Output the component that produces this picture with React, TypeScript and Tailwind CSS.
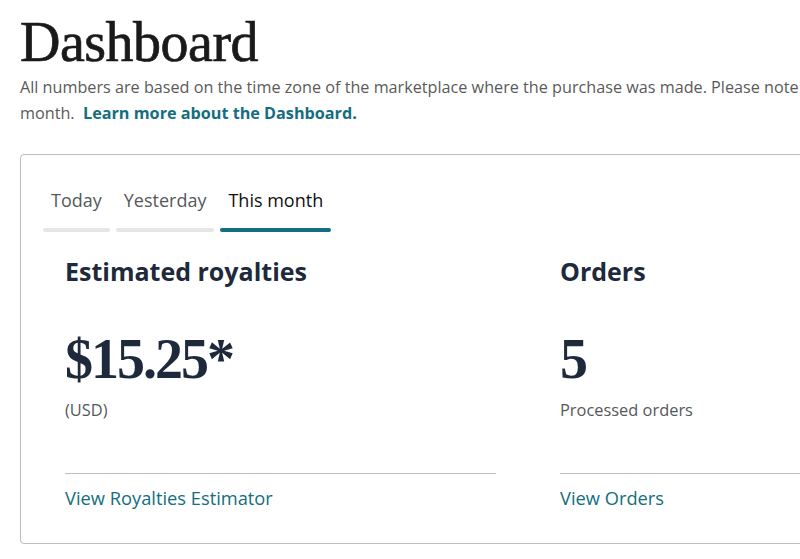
import React from "react";

const sans = { fontFamily: '"Open Sans", "Noto Sans", sans-serif' };

export default function App() {
  return (
    <div className="w-[800px] h-[559px] overflow-hidden bg-white" style={sans}>
      <div className="pl-[20px] w-[1400px]">
        <h1
          className="text-[56px] leading-[56px] pt-[14px] text-[#1a1a1a] font-normal tracking-[-0.5px] [-webkit-text-stroke:0.7px_#1a1a1a]"
          style={{ fontFamily: '"Liberation Serif", "DejaVu Serif", serif' }}
        >
          Dashboard
        </h1>
        <div className="mt-[4px] text-[16.2px] leading-[26px] text-[#5a5a5a]">
          <div className="whitespace-nowrap">
            All numbers are based on the time zone of the marketplace where the purchase was made. Please note that numbers may change during the
          </div>
          <div className="whitespace-nowrap">
            month.{"\u00a0\u00a0"}
            <a className="font-bold text-[#146e7e]">Learn more about the Dashboard.</a>
          </div>
        </div>

        <div className="mt-[28px] border border-[#bdbdbd] rounded-[4px] w-[1200px] px-[22px] pt-[33px] pb-[33px]">
          <div className="flex gap-[6px]">
            {[
              { label: "Today", active: false },
              { label: "Yesterday", active: false },
              { label: "This month", active: true },
            ].map((t) => (
              <div key={t.label} className="flex flex-col">
                <div
                  className={
                    t.active
                      ? "px-[8px] text-[18px] leading-[24px] text-[#0f1111]"
                      : "px-[8px] text-[18px] leading-[24px] text-[#565959]"
                  }
                >
                  {t.label}
                </div>
                <div
                  className={
                    t.active
                      ? "mt-[16px] h-[4px] rounded-full bg-[#146e7e]"
                      : "mt-[16px] h-[4px] rounded-full bg-[#e6e6e6]"
                  }
                />
              </div>
            ))}
          </div>

          <div className="flex gap-[64px] px-[22px] mt-[25px]">
            <Metric
              title="Estimated royalties"
              value="$15.25*"
              sub="(USD)"
              link="View Royalties Estimator"
            />
            <Metric title="Orders" value="5" sub="Processed orders" link="View Orders" />
          </div>
        </div>
      </div>
    </div>
  );
}

function Metric({
  title,
  value,
  sub,
  link,
}: {
  title: string;
  value: string;
  sub: string;
  link: string;
}) {
  return (
    <div className="w-[431px] flex flex-col">
      <div className="text-[25px] leading-[28px] font-bold text-[#1e2a3b]">{title}</div>
      <div
        className="mt-[46px] text-[56px] leading-[56px] font-bold text-[#1e2a3b] tracking-[-2px]"
        style={{ fontFamily: '"Liberation Serif", "DejaVu Serif", serif' }}
      >
        {value}
      </div>
      <div className="mt-[12px] text-[16.4px] leading-[22px] text-[#565959]">{sub}</div>
      <div className="mt-[52px] border-t border-[#bdbdbd]" />
      <a className="mt-[12px] text-[18.3px] leading-[24px] text-[#146e7e]">{link}</a>
    </div>
  );
}
